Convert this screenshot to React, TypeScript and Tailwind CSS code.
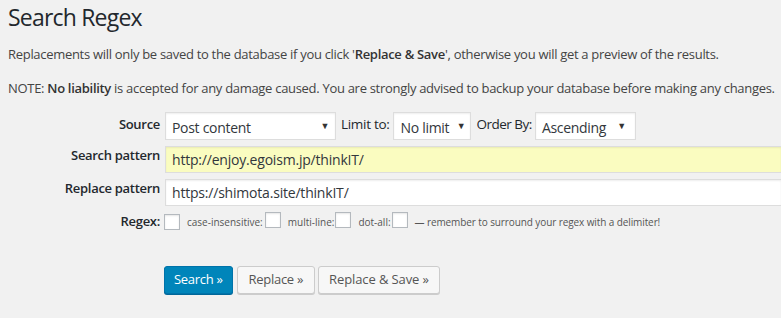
import React from "react";

const font = { fontFamily: '"Open Sans", "Noto Sans", sans-serif' };

function Select({ w, text, arrowPad }: { w: string; text: string; arrowPad?: string }) {
  return (
    <div
      className={`${w} h-[28px] bg-white border border-[#dddddd] shadow-[inset_0_1px_2px_rgba(0,0,0,0.07)] flex items-center justify-between pl-[6px] ${arrowPad ?? "pr-[6px]"} text-[14px] text-[#32373c] tracking-[-0.3px]`}
    >
      <span className="pt-[2px]">{text}</span>
      <span className="text-[9px] text-[#333]">▼</span>
    </div>
  );
}

function Check() {
  return (
    <span className="inline-block w-[16px] h-[16px] bg-white border border-[#b4b9be] shadow-[inset_0_1px_2px_rgba(0,0,0,0.1)] shrink-0" />
  );
}

export default function App() {
  return (
    <div
      className="w-[781px] h-[318px] overflow-hidden bg-[#f1f1f1] pl-[8px] pt-[2px] text-[#444]"
      style={font}
    >
      <h1 className="text-[23px] leading-[30px] text-[#23282d] font-normal tracking-[-0.8px]">
        Search Regex
      </h1>
      <p className="mt-[12px] text-[13px] leading-[20px] tracking-[-0.3px] whitespace-nowrap">
        Replacements will only be saved to the database if you click '<b className="font-semibold text-[#333]">Replace &amp; Save</b>', otherwise you will get a preview of the results.
      </p>
      <p className="mt-[14px] text-[13px] leading-[20px] tracking-[-0.3px] whitespace-nowrap">
        NOTE: <b className="font-semibold text-[#333]">No liability</b> is accepted for any damage caused. You are strongly advised to backup your database before making any changes.
      </p>

      <div className="mt-[14px] flex flex-col">
        {/* Source row */}
        <div className="flex items-center h-[28px]">
          <div className="w-[152px] text-right text-[13px] font-semibold text-[#23282d] tracking-[-0.3px] -mt-[2px]">
            Source
          </div>
          <div className="ml-[5px] flex items-center">
            <Select w="w-[171px]" text="Post content" />
            <span className="ml-[5px] text-[13.5px] text-[#23282d] font-medium tracking-[-0.3px] -mt-[4px]">Limit to:</span>
            <div className="ml-[4px]">
              <Select w="w-[78px]" text="No limit" arrowPad="pr-[5px]" />
            </div>
            <span className="ml-[5px] text-[13.5px] text-[#23282d] font-medium tracking-[-0.5px] -mt-[4px]">Order By:</span>
            <div className="ml-[3px]">
              <Select w="w-[101px]" text="Ascending" arrowPad="pr-[9px]" />
            </div>
          </div>
        </div>

        {/* Search pattern */}
        <div className="flex mt-[6px] h-[27px]">
          <div className="w-[152px] text-right text-[13px] font-semibold text-[#23282d] tracking-[-0.3px]">
            Search pattern
          </div>
          <div className="ml-[5px] flex-1 h-[27px] bg-[#fafcc0] border border-[#dddddd] border-r-0 shadow-[inset_0_1px_2px_rgba(0,0,0,0.07)] flex items-center pl-[6px] text-[14px] text-[#32373c] tracking-[-0.2px]">
            http://enjoy.egoism.jp/thinkIT/
          </div>
        </div>

        {/* Replace pattern */}
        <div className="flex mt-[6px] h-[27px]">
          <div className="w-[152px] text-right text-[13px] font-semibold text-[#23282d] tracking-[-0.3px]">
            Replace pattern
          </div>
          <div className="ml-[5px] flex-1 h-[27px] bg-white border border-[#dddddd] border-r-0 shadow-[inset_0_1px_2px_rgba(0,0,0,0.07)] flex items-center pl-[6px] text-[14px] text-[#32373c] tracking-[-0.2px]">
            https://shimota.site/thinkIT/
          </div>
        </div>

        {/* Regex row */}
        <div className="flex items-center mt-[8px] h-[16px]">
          <div className="w-[152px] text-right text-[13px] font-semibold text-[#23282d] tracking-[-0.3px]">
            Regex:
          </div>
          <div className="ml-[4px] flex items-center text-[10px] text-[#555] tracking-[0px]">
            <Check />
            <span className="ml-[7px]">case-insensitive:</span>
            <span className="ml-[2px]"><Check /></span>
            <span className="ml-[7px]">multi-line:</span>
            <span className="ml-[1px]"><Check /></span>
            <span className="ml-[7px]">dot-all:</span>
            <span className="ml-[1px]"><Check /></span>
            <span className="ml-[7px] tracking-[-0.1px]">— remember to surround your regex with a delimiter!</span>
          </div>
        </div>

        {/* Buttons */}
        <div className="flex mt-[36px] ml-[156px] text-[13px] tracking-[-0.3px]">
          <button className="h-[28px] px-[9px] rounded-[3px] bg-[#0085ba] border border-[#0073aa] text-white shadow-[0_1px_0_#006799]">
            Search »
          </button>
          <button className="ml-[4px] h-[28px] px-[11px] rounded-[3px] bg-[#f7f7f7] border border-[#cccccc] text-[#555] shadow-[0_1px_0_#cccccc]">
            Replace »
          </button>
          <button className="ml-[3px] h-[28px] px-[10px] rounded-[3px] bg-[#f7f7f7] border border-[#cccccc] text-[#555] shadow-[0_1px_0_#cccccc] tracking-[-0.1px]">
            Replace &amp; Save »
          </button>
        </div>
      </div>
    </div>
  );
}
